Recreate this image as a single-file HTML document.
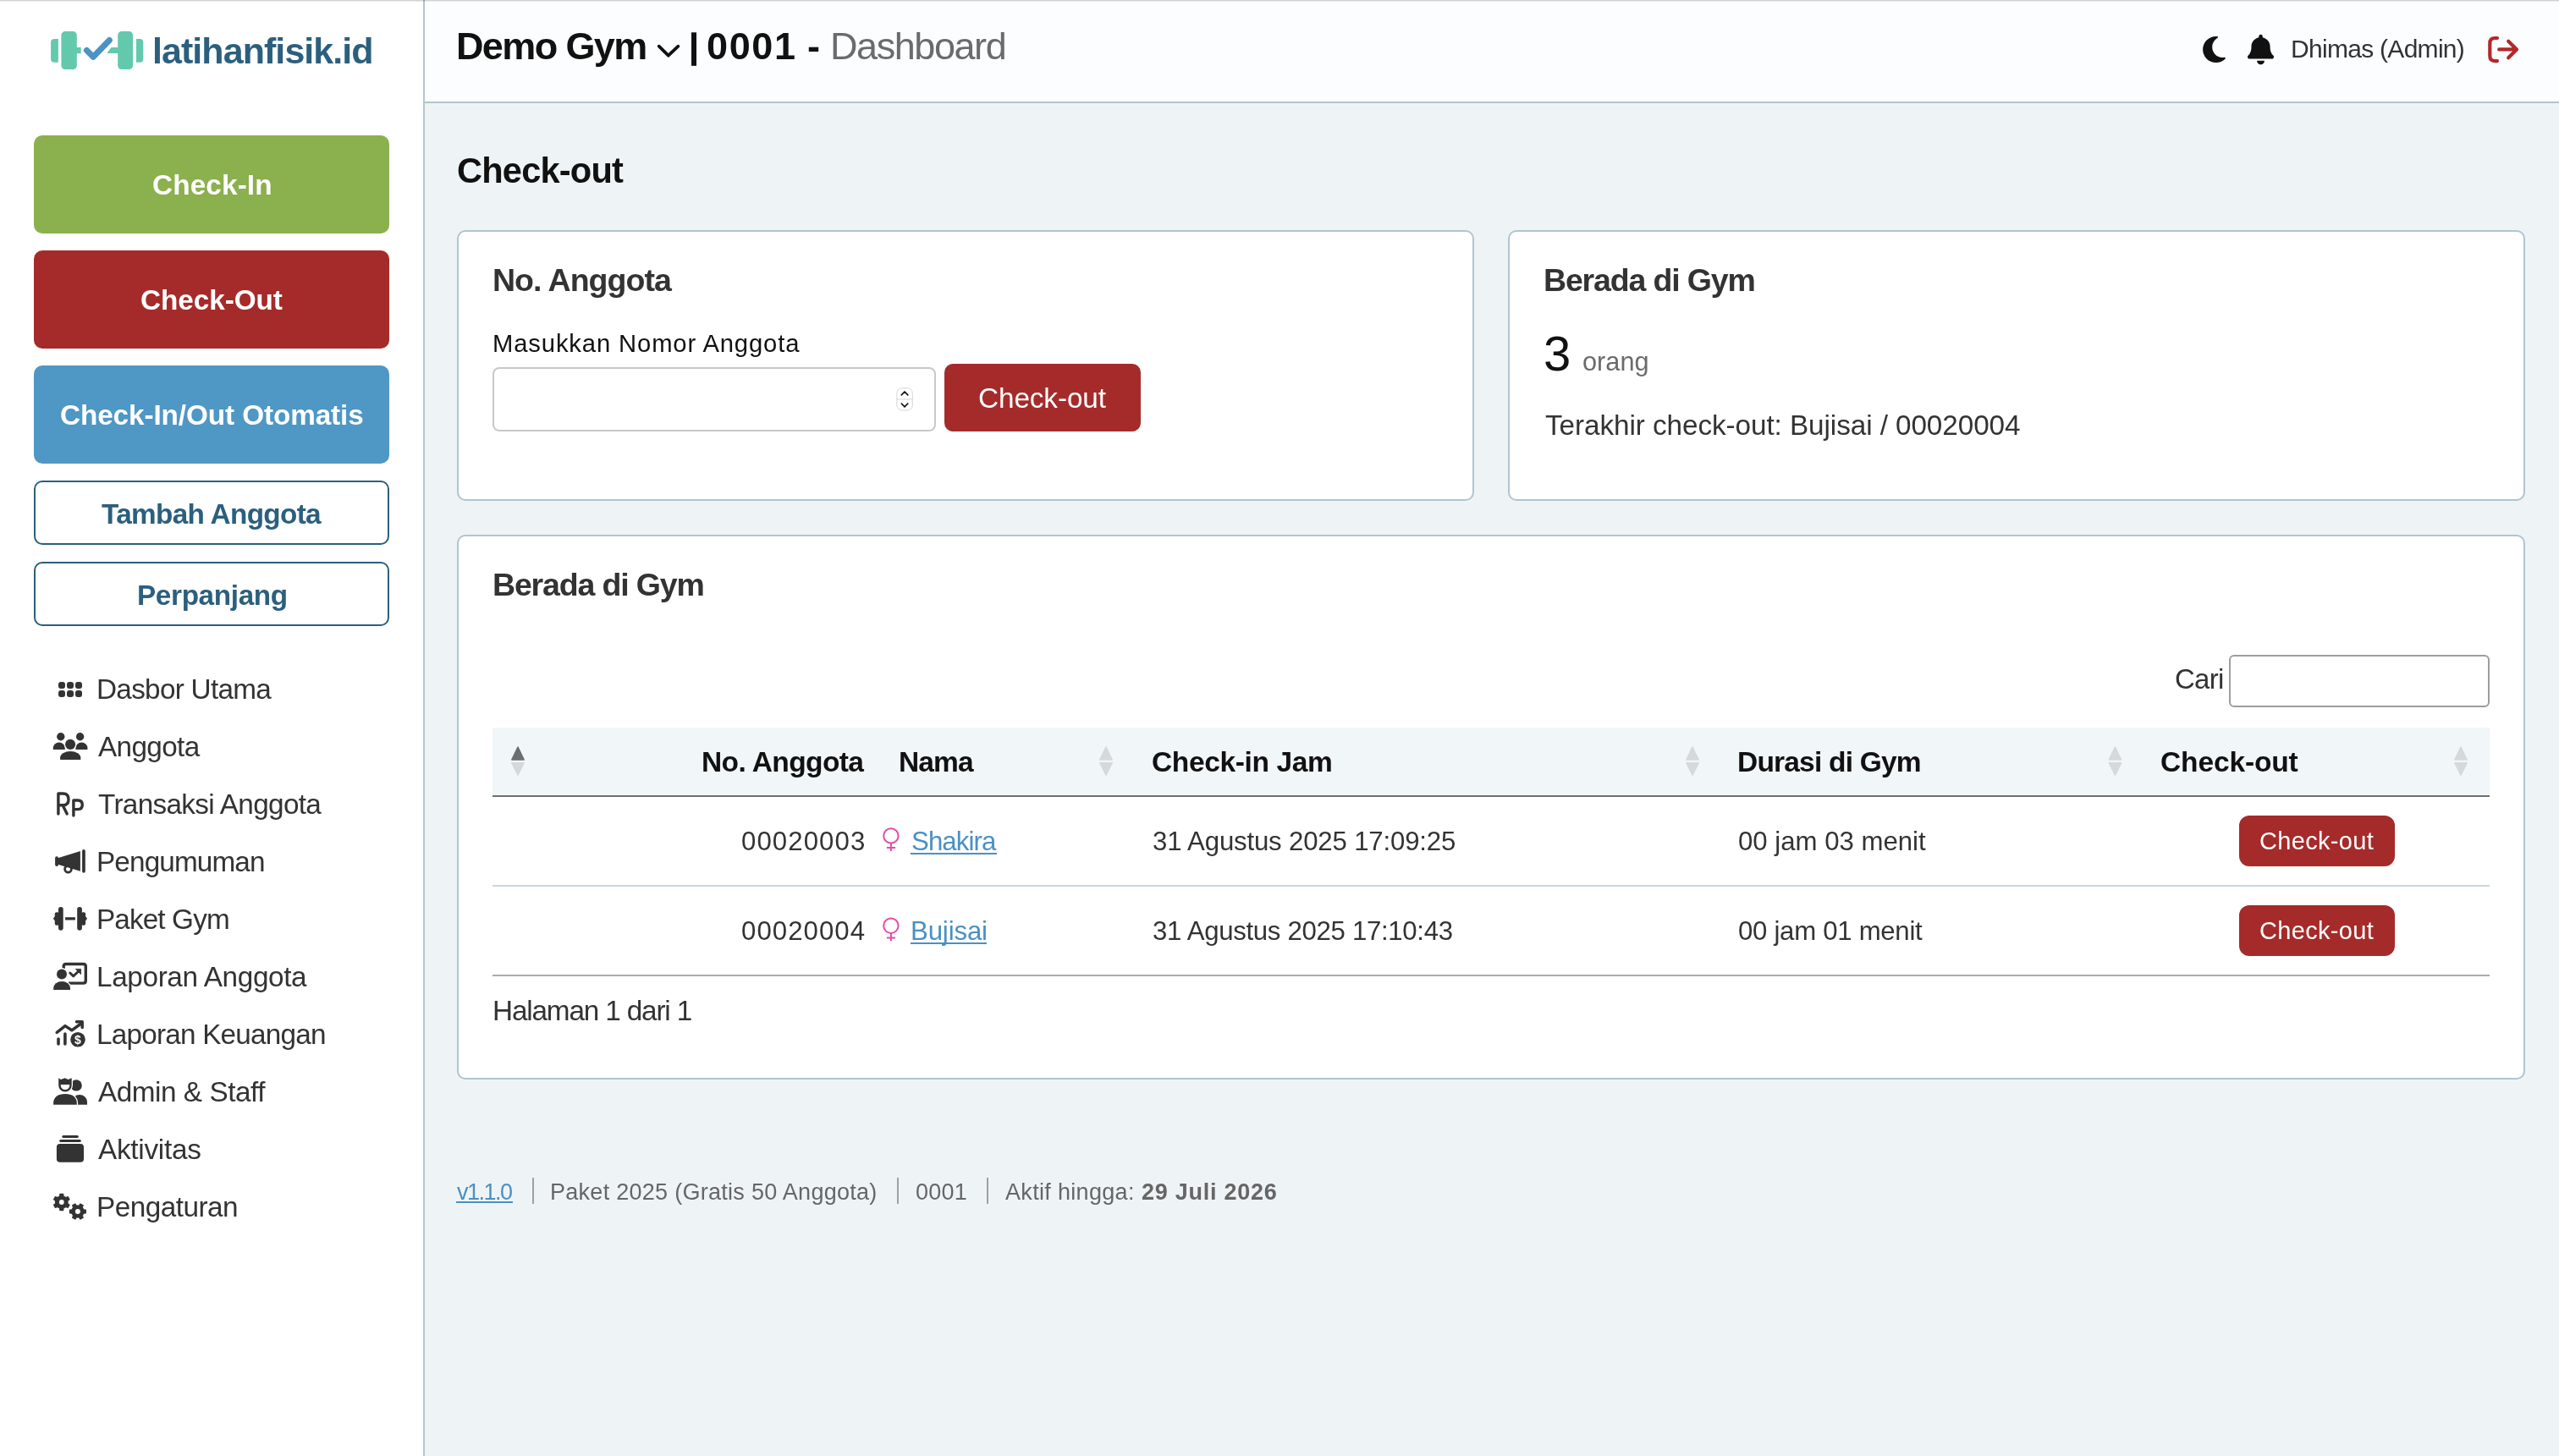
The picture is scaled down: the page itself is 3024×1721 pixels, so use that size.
<!DOCTYPE html><html><head><meta charset="utf-8"><style>
html,body{margin:0;padding:0}
html,body{overflow:hidden;background:#eef4f6}
#root{position:absolute;left:0;top:0;width:3024px;height:1721px;overflow:hidden;background:#eef4f6;transform-origin:0 0;font-family:"Liberation Sans",sans-serif}
.b{position:absolute;box-sizing:border-box}
.t{position:absolute;white-space:nowrap;will-change:transform;font-family:"Liberation Sans",sans-serif}
svg{position:absolute;left:0;top:0}
</style></head><body><div id="root">
<div class=b style="left:0px;top:0px;width:500px;height:1721px;background:#ffffff;"></div>
<div class=b style="left:500px;top:0px;width:2px;height:1721px;background:#b4c6d2;"></div>
<div class=b style="left:502px;top:0px;width:2522px;height:120px;background:#fcfdfe;"></div>
<div class=b style="left:502px;top:120px;width:2522px;height:2px;background:#b1c4cd;"></div>
<div class=b style="left:0px;top:0px;width:3024px;height:1px;background:#d2d2d2;"></div>
<div class=b style="left:0px;top:1px;width:3024px;height:1px;background:#ebebeb;"></div>
<div class=b style="left:500px;top:0px;width:2px;height:2px;background:#9aabb6;"></div>
<div class=b style="left:40px;top:160px;width:420px;height:116px;background:#8bb04e;border-radius:10px;"></div>
<div class=b style="left:40px;top:296px;width:420px;height:116px;background:#a52b2a;border-radius:10px;"></div>
<div class=b style="left:40px;top:432px;width:420px;height:116px;background:#4f97c5;border-radius:10px;"></div>
<div class=b style="left:40px;top:568px;width:420px;height:76px;background:#fff;border:2px solid #2b5f7e;border-radius:10px;"></div>
<div class=b style="left:40px;top:664px;width:420px;height:76px;background:#fff;border:2px solid #2b5f7e;border-radius:10px;"></div>
<div class=b style="left:540px;top:272px;width:1202px;height:320px;background:#fff;border:2px solid #b0c5d0;border-radius:10px;"></div>
<div class=b style="left:1782px;top:272px;width:1202px;height:320px;background:#fff;border:2px solid #b0c5d0;border-radius:10px;"></div>
<div class=b style="left:540px;top:632px;width:2444px;height:644px;background:#fff;border:2px solid #b0c5d0;border-radius:10px;"></div>
<div class=b style="left:582px;top:434px;width:524px;height:76px;background:#fff;border:2px solid #c8c8c8;border-radius:8px;"></div>
<div class=b style="left:1116px;top:430px;width:232px;height:80px;background:#a52b2a;border-radius:10px;"></div>
<div class=b style="left:2634px;top:774px;width:308px;height:62px;background:#fff;border:2px solid #9d9d9d;border-radius:6px;"></div>
<div class=b style="left:582px;top:860px;width:2360px;height:80px;background:#f1f6f8;"></div>
<div class=b style="left:582px;top:940px;width:2360px;height:2px;background:#6f6f6f;"></div>
<div class=b style="left:582px;top:1046px;width:2360px;height:2px;background:#c9d7df;"></div>
<div class=b style="left:582px;top:1152px;width:2360px;height:2px;background:#ababab;"></div>
<div class=b style="left:2646px;top:964px;width:184px;height:60px;background:#a52b2a;border-radius:12px;"></div>
<div class=b style="left:2646px;top:1070px;width:184px;height:60px;background:#a52b2a;border-radius:12px;"></div>
<div class=b style="left:629px;top:1392px;width:2px;height:31px;background:#a0a0a0;"></div>
<div class=b style="left:1060px;top:1392px;width:2px;height:31px;background:#a0a0a0;"></div>
<div class=b style="left:1166px;top:1392px;width:2px;height:31px;background:#a0a0a0;"></div>
<div class=t style="left:180.34px;top:38.9px;font-size:43px;line-height:43px;color:#2b5f7e;font-weight:bold;letter-spacing:-0.94px;">latihanfisik.id</div>
<div class=t style="left:179.78px;top:202px;font-size:33.3px;line-height:33.3px;color:#fff;font-weight:bold;letter-spacing:0.14px;">Check-In</div>
<div class=t style="left:165.56px;top:338px;font-size:33.3px;line-height:33.3px;color:#fff;font-weight:bold;letter-spacing:-0.05px;">Check-Out</div>
<div class=t style="left:70.66px;top:474px;font-size:33.3px;line-height:33.3px;color:#fff;font-weight:bold;letter-spacing:-0.1px;">Check-In/Out Otomatis</div>
<div class=t style="left:119.88px;top:590.5px;font-size:33.3px;line-height:33.3px;color:#2b5f7e;font-weight:bold;letter-spacing:-0.66px;">Tambah Anggota</div>
<div class=t style="left:161.56px;top:686.5px;font-size:33.3px;line-height:33.3px;color:#2b5f7e;font-weight:bold;letter-spacing:-0.35px;">Perpanjang</div>
<div class=t style="left:114px;top:798px;font-size:33.3px;line-height:33.3px;color:#333;letter-spacing:-0.71px;">Dasbor Utama</div>
<div class=t style="left:116px;top:866px;font-size:33.3px;line-height:33.3px;color:#333;letter-spacing:-0.64px;">Anggota</div>
<div class=t style="left:116px;top:934px;font-size:33.3px;line-height:33.3px;color:#333;letter-spacing:-0.67px;">Transaksi Anggota</div>
<div class=t style="left:114px;top:1002px;font-size:33.3px;line-height:33.3px;color:#333;letter-spacing:-0.87px;">Pengumuman</div>
<div class=t style="left:114px;top:1070px;font-size:33.3px;line-height:33.3px;color:#333;letter-spacing:-0.88px;">Paket Gym</div>
<div class=t style="left:114px;top:1138px;font-size:33.3px;line-height:33.3px;color:#333;letter-spacing:-0.36px;">Laporan Anggota</div>
<div class=t style="left:114px;top:1206px;font-size:33.3px;line-height:33.3px;color:#333;letter-spacing:-0.79px;">Laporan Keuangan</div>
<div class=t style="left:116px;top:1274px;font-size:33.3px;line-height:33.3px;color:#333;letter-spacing:-0.46px;">Admin &amp; Staff</div>
<div class=t style="left:116px;top:1342px;font-size:33.3px;line-height:33.3px;color:#333;letter-spacing:-0.26px;">Aktivitas</div>
<div class=t style="left:114px;top:1410px;font-size:33.3px;line-height:33.3px;color:#333;letter-spacing:-0.52px;">Pengaturan</div>
<div class=t style="left:538.88px;top:32px;font-size:45px;line-height:45px;color:#111;font-weight:bold;letter-spacing:-1.63px;">Demo Gym</div>
<div class=t style="left:835px;top:32px;font-size:45px;line-height:45px;color:#111;font-weight:bold;letter-spacing:1.64px;">0001</div>
<div class=t style="left:953.56px;top:32px;font-size:45px;line-height:45px;color:#111;font-weight:bold;">-</div>
<div class=t style="left:980.56px;top:32px;font-size:45px;line-height:45px;color:#6b6b6b;letter-spacing:-1.43px;">Dashboard</div>
<div class=t style="left:2707px;top:43px;font-size:30px;line-height:30px;color:#333;letter-spacing:-0.71px;">Dhimas (Admin)</div>
<div class=t style="left:540.44px;top:181px;font-size:41.6px;line-height:41.6px;color:#111;font-weight:bold;letter-spacing:-0.81px;">Check-out</div>
<div class=t style="left:582.12px;top:313px;font-size:37.5px;line-height:37.5px;color:#333;font-weight:bold;letter-spacing:-0.97px;">No. Anggota</div>
<div class=t style="left:581.56px;top:392.3px;font-size:29.2px;line-height:29.2px;color:#111;letter-spacing:0.88px;">Masukkan Nomor Anggota</div>
<div class=t style="left:1156px;top:454px;font-size:33.3px;line-height:33.3px;color:#fff;letter-spacing:-0.09px;">Check-out</div>
<div class=t style="left:1823.78px;top:312.8px;font-size:37.5px;line-height:37.5px;color:#333;font-weight:bold;letter-spacing:-1.16px;">Berada di Gym</div>
<div class=t style="left:1824.12px;top:388.8px;font-size:58px;line-height:58px;color:#111;">3</div>
<div class=t style="left:1870.22px;top:412.8px;font-size:30.7px;line-height:30.7px;color:#6b6b6b;letter-spacing:0.01px;">orang</div>
<div class=t style="left:1825.78px;top:486px;font-size:33.3px;line-height:33.3px;color:#333;letter-spacing:-0.08px;">Terakhir check-out: Bujisai / 00020004</div>
<div class=t style="left:582.12px;top:673.4px;font-size:37.5px;line-height:37.5px;color:#333;font-weight:bold;letter-spacing:-1.16px;">Berada di Gym</div>
<div class=t style="left:2570px;top:786.2px;font-size:33px;line-height:33px;color:#333;letter-spacing:-0.72px;">Cari</div>
<div class=t style="left:828.78px;top:884.3px;font-size:33.5px;line-height:33.5px;color:#111;font-weight:bold;letter-spacing:-0.59px;">No. Anggota</div>
<div class=t style="left:1062px;top:884.3px;font-size:33.5px;line-height:33.5px;color:#111;font-weight:bold;letter-spacing:-0.87px;">Nama</div>
<div class=t style="left:1361.1px;top:884.3px;font-size:33.5px;line-height:33.5px;color:#111;font-weight:bold;letter-spacing:-0.36px;">Check-in Jam</div>
<div class=t style="left:2053.22px;top:884.3px;font-size:33.5px;line-height:33.5px;color:#111;font-weight:bold;letter-spacing:-0.8px;">Durasi di Gym</div>
<div class=t style="left:2553.22px;top:884.3px;font-size:33.5px;line-height:33.5px;color:#111;font-weight:bold;letter-spacing:-0.13px;">Check-out</div>
<div class=t style="left:876.12px;top:979px;font-size:31.2px;line-height:31.2px;color:#333;letter-spacing:1.07px;">00020003</div>
<div class=t style="left:1076.56px;top:979px;font-size:31.2px;line-height:31.2px;color:#4a90c2;letter-spacing:-0.9px;">Shakira</div>
<div class=b style="left:1076.4px;top:1007.5px;width:102px;height:2px;background:#4a90c2;"></div>
<div class=t style="left:1361.78px;top:979px;font-size:31.2px;line-height:31.2px;color:#333;letter-spacing:-0.18px;">31 Agustus 2025 17:09:25</div>
<div class=t style="left:2054px;top:979px;font-size:31.2px;line-height:31.2px;color:#333;letter-spacing:-0.02px;">00 jam 03 menit</div>
<div class=t style="left:2670.22px;top:980px;font-size:29px;line-height:29px;color:#fff;letter-spacing:0.33px;">Check-out</div>
<div class=t style="left:876.12px;top:1085.3px;font-size:31.2px;line-height:31.2px;color:#333;letter-spacing:1.04px;">00020004</div>
<div class=t style="left:1075.56px;top:1085.3px;font-size:31.2px;line-height:31.2px;color:#4a90c2;letter-spacing:-0.14px;">Bujisai</div>
<div class=b style="left:1076.4px;top:1113.8px;width:89.5px;height:2px;background:#4a90c2;"></div>
<div class=t style="left:1361.78px;top:1085.3px;font-size:31.2px;line-height:31.2px;color:#333;letter-spacing:-0.32px;">31 Agustus 2025 17:10:43</div>
<div class=t style="left:2054px;top:1085.3px;font-size:31.2px;line-height:31.2px;color:#333;letter-spacing:-0.3px;">00 jam 01 menit</div>
<div class=t style="left:2670.22px;top:1086px;font-size:29px;line-height:29px;color:#fff;letter-spacing:0.33px;">Check-out</div>
<div class=t style="left:581.56px;top:1178px;font-size:33.3px;line-height:33.3px;color:#333;letter-spacing:-1.16px;">Halaman 1 dari 1</div>
<div class=t style="left:540.22px;top:1395.7px;font-size:27px;line-height:27px;color:#4a90c2;letter-spacing:-1.51px;">v1.1.0</div>
<div class=b style="left:539.3px;top:1420.2px;width:67px;height:2px;background:#4a90c2;"></div>
<div class=t style="left:650px;top:1395.7px;font-size:27px;line-height:27px;color:#666;letter-spacing:0.28px;">Paket 2025 (Gratis 50 Anggota)</div>
<div class=t style="left:1081.66px;top:1395.7px;font-size:27px;line-height:27px;color:#666;letter-spacing:0.2px;">0001</div>
<div class=t style="left:1188.22px;top:1395.7px;font-size:27px;line-height:27px;color:#666;letter-spacing:0.32px;">Aktif hingga:</div>
<div class=t style="left:1348.7px;top:1395.7px;font-size:27px;line-height:27px;color:#666;font-weight:bold;letter-spacing:0.74px;">29 Juli 2026</div>
<svg width="3024" height="1721" viewBox="0 0 3024 1721"><path fill="#63c9ad" d="M64.1,46.1 H68.9 V73.8 H64.1 Q60.1,73.8 60.1,69.8 V50.1 Q60.1,46.1 64.1,46.1Z"/><rect fill="#63c9ad" x="72.4" y="37.1" width="18.4" height="44.9" rx="4.5"/><rect fill="#63c9ad" x="90" y="56" width="5.7" height="7.1"/><polygon fill="#63c9ad" points="126.3,63.1 131.5,56 140,56 140,63.1"/><rect fill="#63c9ad" x="139.2" y="37.1" width="17.8" height="44.9" rx="4.5"/><path fill="#63c9ad" d="M161,46.1 H165.3 Q169.3,46.1 169.3,50.1 V69.8 Q169.3,73.8 165.3,73.8 H161Z"/><polyline fill="none" stroke="#4a93c6" stroke-width="7.1" stroke-linecap="round" stroke-linejoin="round" points="102.5,59.5 110.2,67.2 129.3,47.5"/><rect fill="#333" x="69" y="806" width="8" height="8" rx="3"/><rect fill="#333" x="69" y="816" width="8" height="8" rx="3"/><rect fill="#333" x="79" y="806" width="8" height="8" rx="3"/><rect fill="#333" x="79" y="816" width="8" height="8" rx="3"/><rect fill="#333" x="89" y="806" width="8" height="8" rx="3"/><rect fill="#333" x="89" y="816" width="8" height="8" rx="3"/><circle fill="#333" cx="71.8" cy="870.8" r="4.7"/><circle fill="#333" cx="94.6" cy="870.8" r="4.7"/><path fill="#333" d="M62.8,886 V884 A7,6.4 0 0 1 76.8,884 V886Z"/><path fill="#333" d="M89.4,886 V884 A7,6.4 0 0 1 103.4,884 V886Z"/><circle fill="#333" stroke="#fff" stroke-width="2.6" paint-order="stroke" cx="83.1" cy="879.9" r="6.05"/><path fill="#333" stroke="#fff" stroke-width="2.6" paint-order="stroke" d="M71.1,898 V895.5 A12.1,7.4 0 0 1 95.3,895.5 V898Z"/><path fill="none" stroke="#333" stroke-width="3.4" stroke-linecap="round" stroke-linejoin="round" d="M68.9,962 V938 H74.5 Q81,938 81,944.9 Q81,951.7 74.5,951.7 H69 M74.2,952 L79.2,962"/><path fill="none" stroke="#333" stroke-width="3.4" stroke-linecap="round" stroke-linejoin="round" d="M86.9,964 V946 H92 Q97.3,946 97.3,951.3 Q97.3,956.6 92,956.6 H87.2"/><rect fill="#333" x="65.1" y="1012.3" width="3.9" height="11.6" rx="1.9"/><polygon fill="#333" points="68.3,1014.3 94.9,1006 94.9,1029.8 68.3,1021.7"/><rect fill="#333" x="97.1" y="1004.1" width="3.7" height="27.6" rx="1.85"/><circle fill="none" stroke="#333" stroke-width="2.8" cx="80.5" cy="1027.2" r="3.9"/><polygon fill="#333" points="65,1083 62.8,1085.8 65,1088.6"/><rect fill="#333" x="64.8" y="1078.3" width="5" height="15.4" rx="2"/><rect fill="#333" x="69" y="1072" width="5.7" height="27.7" rx="2.85"/><rect fill="#333" x="77.1" y="1084.2" width="11.8" height="3.3"/><rect fill="#333" x="91.2" y="1072" width="5.7" height="27.7" rx="2.85"/><rect fill="#333" x="96.1" y="1078.3" width="5" height="15.4" rx="2"/><polygon fill="#333" points="100.9,1083 103.1,1085.8 100.9,1088.6"/><path fill="none" stroke="#333" stroke-width="3.4" stroke-linejoin="round" d="M75.2,1145 V1142.3 Q75.2,1139.5 78,1139.5 H98.5 Q101.3,1139.5 101.3,1142.3 V1159.3 Q101.3,1162.1 98.5,1162.1 H81"/><polyline fill="none" stroke="#333" stroke-width="3" stroke-linecap="round" stroke-linejoin="round" points="82.8,1150 86.8,1153.8 92.5,1148.2"/><polygon fill="#333" stroke="#333" stroke-width="0.8" stroke-linejoin="round" points="89.3,1145.4 95.6,1145.4 95.6,1151.7"/><circle fill="#333" stroke="#fff" stroke-width="2.6" paint-order="stroke" cx="73" cy="1151.4" r="6"/><path fill="#333" stroke="#fff" stroke-width="2.6" paint-order="stroke" d="M63.2,1170 V1168 A9.9,8 0 0 1 83,1168 V1170Z"/><polyline fill="none" stroke="#333" stroke-width="3.5" stroke-linecap="round" stroke-linejoin="round" points="67.2,1220.3 77,1212.6 84.8,1217.8 95,1210.5"/><path fill="none" stroke="#333" stroke-width="3.5" stroke-linecap="round" stroke-linejoin="round" d="M90.5,1207.8 H97.2 V1214.5"/><rect fill="#333" x="67.2" y="1226.2" width="3.6" height="9.6" rx="1.8"/><rect fill="#333" x="75.1" y="1220.2" width="3.6" height="15.6" rx="1.8"/><circle fill="#333" cx="92" cy="1228.8" r="8.8"/><text x="92" y="1233.6" fill="#fff" font-family="Liberation Sans" font-weight="bold" font-size="14" text-anchor="middle">$</text><circle fill="#333" cx="90.1" cy="1282.9" r="6.7"/><path fill="#333" d="M85,1305.8 V1302 A9,7.9 0 0 1 103,1302 V1305.8Z"/><path fill="#333" stroke="#fff" stroke-width="2.6" paint-order="stroke" stroke-linejoin="round" d="M69.2,1274.3 L71.8,1276 L76.9,1274.3 L80.5,1276 L84.7,1274.3 V1282.8 A7.75,7.75 0 0 1 69.2,1282.8 Z"/><path fill="#fff" d="M71.7,1281.9 H82.3 V1282.8 A5.3,5.3 0 0 1 71.7,1282.8Z"/><path fill="#333" stroke="#fff" stroke-width="2.6" paint-order="stroke" d="M63.1,1305.8 V1304 C63.1,1297 68.5,1293.1 77,1293.1 C85.5,1293.1 90.8,1297 90.8,1304 V1305.8Z"/><rect fill="#333" x="73.3" y="1342" width="19.5" height="3" rx="1.5"/><rect fill="#333" x="70.2" y="1347" width="25.6" height="3" rx="1.5"/><rect fill="#333" x="66.9" y="1352" width="32.1" height="21.7" rx="4"/><path fill="#333" stroke="#333" stroke-width="1.2" stroke-linejoin="round" d="M70.61,1413.93 L70.89,1411.39 L74.71,1411.39 L74.99,1413.93 L77.82,1415.57 L80.17,1414.54 L82.08,1417.85 L80.02,1419.37 L80.02,1422.63 L82.08,1424.15 L80.17,1427.46 L77.82,1426.43 L74.99,1428.07 L74.71,1430.61 L70.89,1430.61 L70.61,1428.07 L67.78,1426.43 L65.43,1427.46 L63.52,1424.15 L65.58,1422.63 L65.58,1419.37 L63.52,1417.85 L65.43,1414.54 L67.78,1415.57Z"/><circle fill="#fff" cx="72.8" cy="1421" r="2.9"/><path fill="#333" stroke="#333" stroke-width="1.2" stroke-linejoin="round" d="M98.78,1429.86 L101.32,1430.13 L101.32,1433.87 L98.78,1434.14 L97.19,1436.89 L98.23,1439.22 L94.99,1441.09 L93.49,1439.02 L90.31,1439.02 L88.81,1441.09 L85.57,1439.22 L86.61,1436.89 L85.02,1434.14 L82.48,1433.87 L82.48,1430.13 L85.02,1429.86 L86.61,1427.11 L85.57,1424.78 L88.81,1422.91 L90.31,1424.98 L93.49,1424.98 L94.99,1422.91 L98.23,1424.78 L97.19,1427.11Z"/><circle fill="#fff" cx="91.9" cy="1432" r="3"/><polyline fill="none" stroke="#111" stroke-width="3.8" stroke-linecap="round" stroke-linejoin="round" points="778.7,54.7 789.8,65.7 801.4,54.7"/><rect fill="#111" x="817" y="38.3" width="6" height="39.5"/><path fill="#111" transform="translate(2603.1,40.67) scale(0.0696)" d="M223.5 32C100 32 0 132.3 0 256S100 480 223.5 480c60.6 0 115.5-24.2 155.8-63.4c5-4.9 6.3-12.5 3.1-18.7s-10.1-9.7-17-8.5c-9.8 1.700-19.8 2.600-30.1 2.600c-96.9 0-175.5-78.800-175.5-176c0-65.8 36-123.1 89.3-153.3c6.1-3.5 9.2-10.5 7.7-17.3s-7.3-11.9-14.3-12.5c-6.3-.5-12.6-.8-19-.8z"/><path fill="#111" transform="translate(2656,40.7) scale(0.0693)" d="M224 0c-17.7 0-32 14.3-32 32V51.2C119 66 64 130.6 64 208v18.8c0 47-17.3 92.4-48.5 127.6l-7.4 8.3c-8.4 9.4-10.4 22.9-5.3 34.4S19.4 416 32 416H416c12.6 0 24-7.4 29.2-18.9s3.1-25-5.3-34.4l-7.4-8.3C401.3 319.2 384 273.9 384 226.8V208c0-77.4-55-142-128-156.8V32c0-17.7-14.3-32-32-32zm45.3 493.3c12-12 18.7-28.3 18.7-45.3H224 160c0 17 6.7 33.3 18.7 45.3s28.3 18.7 45.3 18.7s33.3-6.7 45.3-18.7z"/><path fill="none" stroke="#b3282a" stroke-width="4.2" stroke-linecap="round" stroke-linejoin="round" d="M2951,45 H2948.3 Q2942.3,45 2942.3,51 V66.1 Q2942.3,72.1 2948.3,72.1 H2951"/><path fill="none" stroke="#b3282a" stroke-width="4.2" stroke-linecap="round" stroke-linejoin="round" d="M2953.2,58.4 H2973 M2964.2,48.7 L2974,58.4 L2964.2,68.2"/><path fill="#6c6e70" stroke="#6c6e70" stroke-width="1.5" stroke-linejoin="round" d="M604.8,898 L612,883 L619.2,898Z"/><path fill="#d5d9dc" stroke="#d5d9dc" stroke-width="1.5" stroke-linejoin="round" d="M604.8,901.7 L619.2,901.7 L612,916.2Z"/><path fill="#d5d9dc" stroke="#d5d9dc" stroke-width="1.5" stroke-linejoin="round" d="M1299.8,898 L1307,883 L1314.2,898Z"/><path fill="#d5d9dc" stroke="#d5d9dc" stroke-width="1.5" stroke-linejoin="round" d="M1299.8,901.7 L1314.2,901.7 L1307,916.2Z"/><path fill="#d5d9dc" stroke="#d5d9dc" stroke-width="1.5" stroke-linejoin="round" d="M1992.8,898 L2000,883 L2007.2,898Z"/><path fill="#d5d9dc" stroke="#d5d9dc" stroke-width="1.5" stroke-linejoin="round" d="M1992.8,901.7 L2007.2,901.7 L2000,916.2Z"/><path fill="#d5d9dc" stroke="#d5d9dc" stroke-width="1.5" stroke-linejoin="round" d="M2492.3,898 L2499.5,883 L2506.7,898Z"/><path fill="#d5d9dc" stroke="#d5d9dc" stroke-width="1.5" stroke-linejoin="round" d="M2492.3,901.7 L2506.7,901.7 L2499.5,916.2Z"/><path fill="#d5d9dc" stroke="#d5d9dc" stroke-width="1.5" stroke-linejoin="round" d="M2900.8,898 L2908,883 L2915.2,898Z"/><path fill="#d5d9dc" stroke="#d5d9dc" stroke-width="1.5" stroke-linejoin="round" d="M2900.8,901.7 L2915.2,901.7 L2908,916.2Z"/><circle fill="none" stroke="#e44ba9" stroke-width="2" cx="1052.9" cy="987.9" r="8.7"/><path fill="none" stroke="#e44ba9" stroke-width="2" d="M1052.9,996.6 V1006 M1047.9,1002.1 H1058"/><circle fill="none" stroke="#e44ba9" stroke-width="2" cx="1052.9" cy="1094.2" r="8.7"/><path fill="none" stroke="#e44ba9" stroke-width="2" d="M1052.9,1102.9 V1112.3 M1047.9,1108.4 H1058"/><rect fill="#fff" stroke="#d6d6d6" stroke-width="1" x="1059.8" y="458.7" width="18.5" height="26.3" rx="6"/><line x1="1059.8" y1="472" x2="1078.3" y2="472" stroke="#d6d6d6" stroke-width="1"/><polyline fill="none" stroke="#111" stroke-width="1.7" stroke-linecap="round" stroke-linejoin="round" points="1065.3,466.8 1069,463 1072.8,466.8"/><polyline fill="none" stroke="#111" stroke-width="1.7" stroke-linecap="round" stroke-linejoin="round" points="1065.3,477 1069,480.8 1072.8,477"/></svg>
</div><script>(function(){var w=window.innerWidth||3024;var s=w/3024;if(Math.abs(s-1)>0.002){document.getElementById("root").style.transform="scale("+s+")";}})();</script></body></html>
